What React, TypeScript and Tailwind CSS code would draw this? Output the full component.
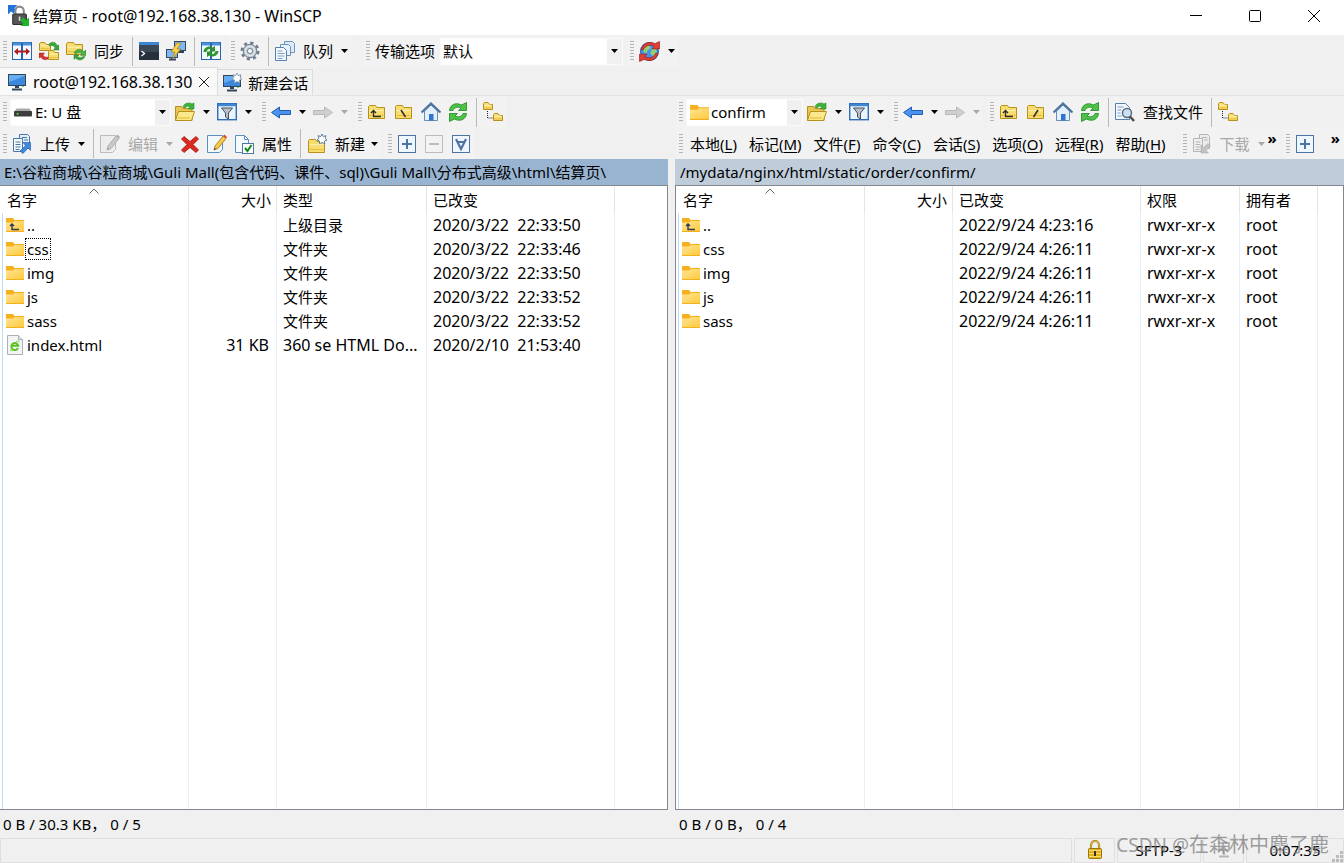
import type { ReactNode } from "react";
import { clsx } from "clsx";

type FileEntry = {
  name: string;
  icon: "up" | "folder" | "html";
  cells: string[];
  focused?: boolean;
};

type Column = {
  title: string;
  width: string;
  align?: "right";
};

const localColumns: Column[] = [
  { title: "名字", width: "w-[187px]" },
  { title: "大小", width: "w-[88px]", align: "right" },
  { title: "类型", width: "w-[150px]" },
  { title: "已改变", width: "w-[188px]" },
];

const localFiles: FileEntry[] = [
  { name: "..", icon: "up", cells: ["", "上级目录", "2020/3/22  22:33:50"] },
  { name: "css", icon: "folder", cells: ["", "文件夹", "2020/3/22  22:33:46"], focused: true },
  { name: "img", icon: "folder", cells: ["", "文件夹", "2020/3/22  22:33:50"] },
  { name: "js", icon: "folder", cells: ["", "文件夹", "2020/3/22  22:33:52"] },
  { name: "sass", icon: "folder", cells: ["", "文件夹", "2020/3/22  22:33:52"] },
  { name: "index.html", icon: "html", cells: ["31 KB", "360 se HTML Do...", "2020/2/10  21:53:40"] },
];

const remoteColumns: Column[] = [
  { title: "名字", width: "w-[187px]" },
  { title: "大小", width: "w-[88px]", align: "right" },
  { title: "已改变", width: "w-[188px]" },
  { title: "权限", width: "w-[99px]" },
  { title: "拥有者", width: "w-[78px]" },
];

const remoteFiles: FileEntry[] = [
  { name: "..", icon: "up", cells: ["", "2022/9/24 4:23:16", "rwxr-xr-x", "root"] },
  { name: "css", icon: "folder", cells: ["", "2022/9/24 4:26:11", "rwxr-xr-x", "root"] },
  { name: "img", icon: "folder", cells: ["", "2022/9/24 4:26:11", "rwxr-xr-x", "root"] },
  { name: "js", icon: "folder", cells: ["", "2022/9/24 4:26:11", "rwxr-xr-x", "root"] },
  { name: "sass", icon: "folder", cells: ["", "2022/9/24 4:26:11", "rwxr-xr-x", "root"] },
];

const menus = [
  ["本地", "L"],
  ["标记", "M"],
  ["文件", "F"],
  ["命令", "C"],
  ["会话", "S"],
  ["选项", "O"],
  ["远程", "R"],
  ["帮助", "H"],
];

/* ---------- icons ---------- */

const Svg = ({ children, className = "size-5" }: { children: ReactNode; className?: string }) => (
  <svg viewBox="0 0 20 20" fill="none" className={clsx("shrink-0", className)} aria-hidden="true">
    {children}
  </svg>
);

const FolderShape = ({ x = 0, y = 0, w = 16, h = 14 }: { x?: number; y?: number; w?: number; h?: number }) => (
  <g>
    <path
      d={`M${x + 0.5} ${y + h - 0.5}V${y + 1.5}l1-1h${w * 0.35}l1.5 2H${x + w - 0.5}V${y + h - 0.5}z`}
      fill="#f7dc6f"
      stroke="#b8901c"
    />
    <path d={`M${x + 1.5} ${y + h * 0.4}H${x + w - 1.5}`} stroke="#fdf3b8" />
    <path d={`M${x + 1.5} ${y + h * 0.75}H${x + w - 1.5}`} stroke="#e5bd38" />
  </g>
);

const PanesShape = () => (
  <g>
    <rect x="0.5" y="1.5" width="19" height="17" fill="#f3f9ff" stroke="#2766ae" />
    <path d="M1 3h18" stroke="#4a90d9" strokeWidth="3" />
    <path d="M10 2v16" stroke="#2766ae" strokeWidth="2" />
  </g>
);

const CompareIcon = () => (
  <Svg>
    <PanesShape />
    <path d="M2 10.500l4-3.500v2.500h8V7l4 3.500-4 3.500v-2.500H6V14z" fill="#b31b1b" />
  </Svg>
);

const SyncBrowseIcon = () => (
  <Svg>
    <FolderShape x={0} y={1} w={12} h={9} />
    <FolderShape x={9} y={9} w={11} h={10} />
    <path d="M10 3c3-3 7-2 8 1.500L20 4v5h-5.500L16 7c-1-2.500-3-3-6-2z" fill="#3aa53a" stroke="#1c7a1c" strokeWidth=".4" />
    <path d="M9 18c-3 1.500-6 .5-7-2l-2 1v-5h5.500L4 14c1 2 3 2.500 5 2z" fill="#d8332c" stroke="#96160f" strokeWidth=".4" />
  </Svg>
);

const SyncFolderIcon = () => (
  <Svg>
    <FolderShape x={0} y={1} w={17} h={13} />
    <path d="M8 12c1.500-4 7-5 9.500-1.500L20 9v5.500h-5.500l1.500-1.500c-2-2-4.500-1.500-6 0z" fill="#4cb044" stroke="#1c7a1c" strokeWidth=".4" />
    <path d="M19 15.500c-1.500 4-7 4.500-9.500 1.500L8 18.500V14h5l-1.500 1.500c2 1.500 4 1 5.500 0z" fill="#3aa53a" stroke="#1c7a1c" strokeWidth=".4" />
  </Svg>
);

const TerminalIcon = () => (
  <Svg>
    <rect x="0" y="1" width="20" height="18" fill="#25303c" />
    <rect x="0" y="1" width="20" height="3" fill="#3e86d2" />
    <path d="M0 4h20v7H0z" fill="#3b4856" />
    <path d="M2.500 10l3 2.500-3 2.500" stroke="#fff" strokeWidth="1.300" />
  </Svg>
);

const PuttyIcon = () => (
  <Svg>
    <rect x="8.500" y=".5" width="11" height="9" fill="#7db8f2" stroke="#33475c" />
    <rect x=".5" y="8.500" width="11" height="8" fill="#7db8f2" stroke="#33475c" />
    <path d="M12 11h6M3 18.500h7M6 17v2" stroke="#33475c" strokeWidth="2" />
    <path d="M11 2L5 11h4l-3 7 9-10h-4l4-6z" fill="#fbd24e" stroke="#a87b10" strokeWidth=".7" />
  </Svg>
);

const RefreshPanesIcon = () => (
  <Svg>
    <PanesShape />
    <path d="M2.500 11c0-4 5-7 9-4.500L14 5v5.500H8.500L10 8.500c-2-1-4 0-4.500 2.500z" fill="#2c962c" />
    <path d="M17.500 10c0 4-5 7-9 4.500L6 16v-5.500h5.500L10 12.500c2 1 4 0 4.500-2.500z" fill="#2c962c" />
  </Svg>
);

const GearIcon = () => (
  <Svg>
    <circle cx="10" cy="10" r="8.200" stroke="#6f7d8c" strokeWidth="2.600" strokeDasharray="3.200 3.240" />
    <circle cx="10" cy="10" r="6.800" fill="#bcc5cf" stroke="#6f7d8c" />
    <circle cx="10" cy="10" r="4.600" stroke="#dfe5eb" strokeWidth="1.500" />
    <circle cx="10" cy="10" r="2.500" fill="#fff" stroke="#6f7d8c" />
  </Svg>
);

const QueueIcon = () => (
  <Svg>
    <path d="M9.500.5h8l2 2v9h-10z" fill="#dcebf9" stroke="#6d93bb" />
    <path d="M5.500 3.500h8l2 2v9h-10z" fill="#e6f1fb" stroke="#6d93bb" />
    <path d="M.5 6.500h8l3 3v10H.5z" fill="#f5faff" stroke="#5580ad" />
    <path d="M2.500 10h5M2.500 12.500h7M2.500 15h7M2.500 17.500h5" stroke="#7ba0c6" />
  </Svg>
);

const GlobeIcon = () => (
  <Svg className="size-[21px]">
    <circle cx="10" cy="10" r="8.500" fill="#4a94e4" stroke="#235a9e" />
    <path d="M5 6l5-2 1 3-3 2-1 3-3-2zM12 8l4-1 1 4-3 4-3-3z" fill="#8fd07a" />
    <path d="M2 8C4 2 9 0 15 2.500L19.500.5v7h-7L14.500 5C10 3 6 4 4 8.500z" fill="#e04038" stroke="#96160f" strokeWidth=".6" />
    <path d="M18 12c-2 6-7 8-13 5.500L.5 19.500v-7h7L5.500 15c4.500 2 8.500 1 10.500-3.500z" fill="#e04038" stroke="#96160f" strokeWidth=".6" />
  </Svg>
);

const MonitorIcon = ({ star }: { star?: boolean }) => (
  <Svg>
    <rect x="1.500" y="2.500" width="17" height="11" fill="#66adf2" stroke="#33475c" />
    <path d="M2 10L18 4v9H2z" fill="#3b88dc" />
    <path d="M10 14v2" stroke="#33475c" strokeWidth="4" />
    <path d="M5 17.500h10" stroke="#33475c" strokeWidth="2" />
    <path d="M15 14.500h2" stroke="#5fe05f" />
    {star && (
      <path d="M15 0l1.200 2.500 2.800-.8-1 2.600 2 1.700-2.500 1 .2 2.800L15 8.500l-2.500 1.300V7L10 6l2-1.700-1-2.600 2.800.8z" fill="#fff" stroke="#8194a8" strokeWidth=".8" />
    )}
  </Svg>
);

const DriveIcon = ({ className }: { className?: string }) => (
  <Svg className={className}>
    <path d="M3 6h14l3 4H0z" fill="#a9a9a9" />
    <rect x="0" y="9" width="20" height="6" rx="1" fill="#3d3d3d" />
    <path d="M3 12h2" stroke="#5df05d" strokeWidth="1.500" />
  </Svg>
);

const OpenFolderIcon = () => (
  <Svg>
    <path d="M.5 18.500v-14h6l1.500 2h9v12z" fill="#e8c452" stroke="#b8901c" />
    <path d="M.5 18.500l3-9h16l-3 9z" fill="#fae88f" stroke="#b8901c" />
    <path d="M3 16h12" stroke="#f1cf52" strokeWidth="2" />
    <path d="M8 5c1-4 6-5 9-3l2-1v6h-6l2-2c-2-1-4-1-5 1z" fill="#3db33d" stroke="#1f8a1f" strokeWidth=".6" />
  </Svg>
);

const FilterIcon = () => (
  <Svg>
    <rect x=".7" y="1.700" width="18.600" height="16" fill="#e9f3fd" stroke="#2f6db4" strokeWidth="1.400" />
    <path d="M1 3h18" stroke="#3f86d2" strokeWidth="2.500" />
    <path d="M4.500 6h11l-4 5v6l-3-2v-4z" fill="#b6bec7" stroke="#49525c" />
  </Svg>
);

const ArrowIcon = ({ forward }: { forward?: boolean }) => (
  <Svg>
    {forward ? (
      <path d="M19.500 10.500l-8-5.500v3.500H.5v4h11V16z" fill="#cfcfcf" stroke="#b8b8b8" />
    ) : (
      <path d="M.5 10.500L8.500 5v3.500h11v4h-11V16z" fill="#4b93ee" stroke="#1f5db0" />
    )}
  </Svg>
);

const MarkFolderIcon = ({ mark }: { mark: "up" | "back" | "slash" | "star" }) => (
  <Svg>
    <FolderShape x={1} y={mark === "star" ? 5 : 3} w={17} h={14} />
    {mark === "up" && <path d="M4 11l2.500-2.500L9 11M6.500 9v5.500H14" stroke="#2c2c2c" strokeWidth="1.300" />}
    {mark === "back" && <path d="M7 8l4.500 7" stroke="#2c2c2c" strokeWidth="1.500" />}
    {mark === "slash" && <path d="M12 8l-4.500 7" stroke="#2c2c2c" strokeWidth="1.500" />}
    {mark === "star" && (
      <path d="M15 0l1.200 2.500 2.800-.8-1 2.600 2 1.700-2.500 1 .2 2.800L15 8.500l-2.500 1.300V7L10 6l2-1.700-1-2.600 2.800.8z" fill="#fff" stroke="#5f7f9f" />
    )}
  </Svg>
);

const HomeIcon = () => (
  <Svg>
    <path d="M3.500 9v9.500h13V9L10 3z" fill="#e3effb" stroke="#6b8db3" />
    <path d="M.5 10.500L10 1.500l9.500 9" stroke="#4f74a0" strokeWidth="2.200" />
    <rect x="8" y="12" width="4.500" height="6.500" fill="#2f74d0" />
  </Svg>
);

const RefreshIcon = () => (
  <Svg>
    <path d="M1.500 8.500C2 2.500 8 0 13.500 3L18.500.5v8h-8L13 6C10 4.500 6.500 5 5 8.500z" fill="#4fc04a" stroke="#1c8a1c" strokeWidth=".8" />
    <path d="M18.500 11.500c-.5 6-6.500 8.500-12 5.500l-5 2.500v-8h8L7 14c3 1.500 6.500 1 8-2.500z" fill="#4fc04a" stroke="#1c8a1c" strokeWidth=".8" />
  </Svg>
);

const TreeIcon = () => (
  <Svg>
    <FolderShape x={0} y={0} w={10} h={8} />
    <FolderShape x={10} y={11} w={10} h={8} />
    <path d="M4.500 9v7H10" stroke="#222" strokeDasharray="1 1" />
  </Svg>
);

const FindIcon = () => (
  <Svg>
    <path d="M.5 1.500h10l4 4v12H.5z" fill="#f2f8fe" stroke="#5580ad" />
    <path d="M2.500 5h6M2.500 8h4M2.500 11h3M2.500 14h4" stroke="#7ba0c6" />
    <circle cx="12" cy="11" r="4.500" fill="#c9e2f8" stroke="#5c6b7a" strokeWidth="1.500" />
    <path d="M15 14.500l4 4.500" stroke="#4a4a4a" strokeWidth="2.400" />
  </Svg>
);

const TransferIcon = ({ disabled }: { disabled?: boolean }) => {
  const stroke = disabled ? "#b5b5b5" : "#4a78ab";
  return (
    <Svg>
      <path d="M7.500.5h8l2 2v12h-10z" fill={disabled ? "#ececec" : "#e3effb"} stroke={stroke} />
      <path d="M1.500 4.500h9v13h-9z" fill={disabled ? "#efefef" : "#f5faff"} stroke={stroke} />
      <path d="M3.500 8h5M3.500 10.500h5M3.500 13h5M3.500 15.500h4M10 3.500h5M12 6h4" stroke={stroke} />
      {disabled ? (
        <path d="M9 19v-8l2.500 2.500L16 9.500l2.500 2.500-4.500 4.500 2.500 2.500z" fill="#c2c2c2" stroke="#a8a8a8" strokeWidth=".6" />
      ) : (
        <path d="M18.500 8.500v8L16 14l-5 5.500L8 17l5.500-5.500L11 8.500z" fill="#3f86dd" stroke="#235a9e" strokeWidth=".6" />
      )}
    </Svg>
  );
};

const EditIcon = ({ disabled }: { disabled?: boolean }) => (
  <Svg>
    <path d="M.5 1.500h15v14l-3 3H.5z" fill={disabled ? "#ededed" : "#f2f8fe"} stroke={disabled ? "#bcbcbc" : "#5c8fc4"} />
    <path d="M7 16l1-4L16 2l3 2.500-8 10z" fill={disabled ? "#c9c9c9" : "#f7c948"} stroke={disabled ? "#a5a5a5" : "#9a7410"} strokeWidth=".8" />
    <path d="M16 2l1.500-1.500L20 3l-1 1.500z" fill={disabled ? "#b0b0b0" : "#e0483c"} />
    <path d="M7 16l.5-2 1.500 1z" fill={disabled ? "#999" : "#333"} />
  </Svg>
);

const DeleteIcon = () => (
  <Svg>
    <path d="M4 2.500l6 5 6-5 2.500 2.500-5.500 5.500 5.500 5.500-2.500 2.500-6-5-6 5L1.500 16 7 10.500 1.500 5z" fill="#dc2a20" stroke="#a0140e" strokeWidth=".8" />
  </Svg>
);

const PropertiesIcon = () => (
  <Svg>
    <path d="M1.500 1.500h9l4 4v13h-13z" fill="#f5faff" stroke="#5c8fc4" />
    <path d="M10.500 1.500v4h4" stroke="#5c8fc4" />
    <rect x="8.500" y="9.500" width="11" height="10" fill="#fff" stroke="#4a78ab" />
    <path d="M11 14l2.500 3 4-6" stroke="#178a17" strokeWidth="2" />
  </Svg>
);

const BoxIcon = ({ kind }: { kind: "plus" | "minus" | "invert" }) => {
  const color = kind === "minus" ? "#bdbdbd" : "#4f74a3";
  return (
    <Svg>
      <rect x="1.500" y="1.500" width="17" height="17" fill={kind === "minus" ? "#f3f3f3" : "#eef6fe"} stroke={color} />
      {kind === "plus" && <path d="M10 5v10M5 10h10" stroke={color} strokeWidth="2" />}
      {kind === "minus" && <path d="M5 10h10" stroke={color} strokeWidth="2" />}
      {kind === "invert" && <path d="M5 5l5 10 5-10M7 8h6" stroke={color} strokeWidth="2.200" />}
    </Svg>
  );
};

const FileIcon = ({ kind, className = "size-[18px]" }: { kind: FileEntry["icon"]; className?: string }) => {
  if (kind === "html") {
    return (
      <svg viewBox="0 0 18 20" fill="none" className="h-5 w-[18px] shrink-0" aria-hidden="true">
        <path d="M1.500.5h11l4 4v15h-15z" fill="#f4f4f4" stroke="#a9b0b8" />
        <path d="M12.500.5v4h4" fill="#dfe3e8" stroke="#a9b0b8" />
        <path d="M12 13a3.500 3.500 0 11.300-2.200H6" stroke="#58c322" strokeWidth="2" />
        <path d="M4.500 14.500c-1 1.500 1 1.500 3.500 0M10 7c2-1.500 3.500-1.500 3 .5" stroke="#7ad84a" />
      </svg>
    );
  }
  return (
    <svg viewBox="0 0 18 18" fill="none" className={clsx("shrink-0", className)} aria-hidden="true">
      <defs>
        <linearGradient id="folder-face" x1="0" y1="0" x2="1" y2="1">
          <stop offset="0" stopColor="#ffe596" />
          <stop offset="1" stopColor="#ffca3e" />
        </linearGradient>
      </defs>
      <path d="M0 2h7l1.500 2H18v12H0z" fill="#f5b01f" />
      <path d="M0 6.500h7L8.500 5H18v10H0z" fill="url(#folder-face)" />
      {kind === "up" && <path d="M4 10l2-2 2 2M6 8.500v5h7" stroke="#2b3a55" strokeWidth="1.400" />}
    </svg>
  );
};

const AppIcon = () => (
  <Svg className="size-[21px]">
    <path d="M0 0h9L6 3l2 2-3 3-2-2-3 3z" fill="#1e74dc" />
    <path d="M7 9V5.500a4 4 0 018 0V9" stroke="#8b8b8b" strokeWidth="2" />
    <rect x="4.500" y="8.500" width="13" height="10" rx="1" fill="#555" stroke="#2f2f2f" />
    <path d="M11 11v4" stroke="#ddd" strokeWidth="1.500" />
    <path d="M20 20h-8l2.500-2.500-3-3 3-2.500 2.500 2.500L20 12z" fill="#1fb52c" />
  </Svg>
);

const LockIcon = () => (
  <svg viewBox="0 0 14 20" fill="none" className="h-5 w-3.5" aria-hidden="true">
    <path d="M3 9V5a4 4 0 018 0v4" stroke="#a8861c" strokeWidth="2.200" />
    <path d="M3 9V5a4 4 0 018 0v4" stroke="#e6c65a" strokeWidth=".8" />
    <rect x=".5" y="8.500" width="13" height="10" rx="1" fill="#e5b31f" stroke="#9a7410" />
    <path d="M1 10.500h12M1 13.500h12M1 16.500h12" stroke="#f9dc6a" />
    <path d="M7 11v5" stroke="#333" strokeWidth="2" />
  </svg>
);

const Caret = ({ disabled, className }: { disabled?: boolean; className?: string }) => (
  <svg viewBox="0 0 7 4" className={clsx("h-1 w-[7px] shrink-0", className)} aria-hidden="true">
    <path d="M0 0h7L3.500 4z" fill={disabled ? "#a8a8a8" : "#000"} />
  </svg>
);

/* ---------- toolbar parts ---------- */

const Bar = ({ children, label, className }: { children: ReactNode; label: string; className?: string }) => (
  <div role="toolbar" aria-label={label} className={clsx("flex h-[31px] shrink-0 items-center bg-[#f2f2f2] pl-[3px]", className)}>
    <span className="mr-px h-5 w-1 shrink-0 bg-[repeating-linear-gradient(to_bottom,#b4b4b4_0px,#b4b4b4_1px,transparent_1px,transparent_3px)]" />
    {children}
  </div>
);

const Sep = () => <span className="mr-0.5 ml-[5px] h-[29px] w-px shrink-0 bg-[#b9b9b9]" />;

type ToolButtonProps = {
  title: string;
  icon: ReactNode;
  text?: string;
  drop?: boolean;
  disabled?: boolean;
  tight?: boolean;
};

const ToolButton = ({ title, icon, text, drop, disabled, tight }: ToolButtonProps) => (
  <button
    type="button"
    title={title}
    aria-label={title}
    disabled={disabled}
    className={clsx("flex h-7 shrink-0 items-center pr-[3px] pl-1 hover:bg-[#d8e6f2]", disabled && "text-[#a8a8a8]")}
  >
    {icon}
    {text && <span className="ml-2 whitespace-nowrap">{text}</span>}
    {drop && <Caret disabled={disabled} className={tight ? "ml-1.5" : "ml-2"} />}
  </button>
);

type ComboProps = {
  label: string;
  value: string;
  className: string;
  icon?: ReactNode;
};

const Combo = ({ label, value, className, icon }: ComboProps) => (
  <div className={clsx("relative h-[27px] shrink-0 border border-[#fafafa] bg-white", className)}>
    <select
      aria-label={label}
      defaultValue={value}
      className={clsx("h-full w-full appearance-none bg-transparent pr-4 outline-none", icon ? "pl-6" : "pl-0.5")}
    >
      <option>{value}</option>
    </select>
    {icon && <span className="pointer-events-none absolute top-[3px] left-[3px]">{icon}</span>}
    <span className="pointer-events-none absolute top-0 right-0 flex h-full w-[15px] items-center justify-center bg-[#f0f0f0]">
      <Caret />
    </span>
  </div>
);

const MoreButton = ({ label, className }: { label: string; className?: string }) => (
  <button type="button" aria-label={label} className={clsx("mb-3 shrink-0 font-bold", className)}>
    »
  </button>
);

const NavigationBars = ({ side }: { side: "local" | "remote" }) => {
  const remote = side === "remote";
  return (
    <div className="flex h-8 items-center gap-1 overflow-hidden">
      <Bar label="位置">
        {remote ? (
          <Combo label="远程目录" value="confirm" className="ml-0.5 w-[117px]" icon={<FileIcon kind="folder" className="size-[19px]" />} />
        ) : (
          <Combo label="驱动器" value="E: U 盘" className="ml-0.5 w-[161px]" icon={<DriveIcon className="size-[18px]" />} />
        )}
        <ToolButton title="打开目录" icon={<OpenFolderIcon />} drop />
        <ToolButton title="过滤" icon={<FilterIcon />} drop />
      </Bar>
      <Bar label="历史">
        <ToolButton title="后退" icon={<ArrowIcon />} drop />
        <ToolButton title="前进" icon={<ArrowIcon forward />} drop disabled />
      </Bar>
      <Bar label="导航">
        <ToolButton title="上级目录" icon={<MarkFolderIcon mark="up" />} />
        <ToolButton title="根目录" icon={<MarkFolderIcon mark={remote ? "slash" : "back"} />} />
        <ToolButton title="主目录" icon={<HomeIcon />} />
        <ToolButton title="刷新" icon={<RefreshIcon />} />
        <Sep />
        {remote && (
          <>
            <ToolButton title="查找文件" icon={<FindIcon />} text="查找文件" />
            <Sep />
          </>
        )}
        <ToolButton title="目录树" icon={<TreeIcon />} />
      </Bar>
    </div>
  );
};

/* ---------- file panel ---------- */

const isLatin = (text: string) => /^[\x20-\x7e]+$/.test(text);

type FileTableProps = {
  columns: Column[];
  files: FileEntry[];
  label: string;
};

const FileTable = ({ columns, files, label }: FileTableProps) => (
  <table aria-label={label} className="h-full w-full table-fixed border-separate border-spacing-0">
    <thead>
      <tr className="h-[27px]">
        {columns.map((column, index) => (
          <th
            key={column.title}
            scope="col"
            className={clsx(
              "relative border-r border-[#e5e5e5] p-0 font-normal",
              column.width,
              column.align === "right" ? "pr-[5px] text-right" : "text-left",
              index === 0 ? "pl-[5px]" : "pl-1.5",
            )}
          >
            {index === 0 && (
              <svg viewBox="0 0 10 6" className="absolute top-0.5 left-[87px] h-1.5 w-2.5" fill="none" aria-hidden="true">
                <path d="M.5 5.500L5 1l4.500 4.500" stroke="#666" />
              </svg>
            )}
            {column.title}
          </th>
        ))}
        <th className="p-0" />
      </tr>
    </thead>
    <tbody>
      {files.map((file) => (
        <tr key={file.name} className="h-6">
          <td className="border-r border-l border-r-[#e6f0fb] border-l-[#bcdcf8] p-0 pl-[3px]">
            <div className="flex h-6 items-center">
              <FileIcon kind={file.icon} />
              <span className={clsx("ml-0.5 px-px leading-5", file.focused && "outline outline-dotted outline-black")}>
                {file.name}
              </span>
            </div>
          </td>
          {file.cells.map((cell, index) => (
            <td
              key={columns[index + 1].title}
              className={clsx(
                "overflow-hidden border-r border-[#e6f0fb] p-0 whitespace-pre",
                columns[index + 1].align === "right" ? "pr-[7px] text-right" : "pl-1.5",
                cell && isLatin(cell) && "text-[16px]",
              )}
            >
              {cell}
            </td>
          ))}
          <td className="p-0" />
        </tr>
      ))}
      <tr>
        {columns.map((column, index) => (
          <td
            key={column.title}
            className={clsx("border-r border-r-[#e6f0fb] p-0", index === 0 && "border-l border-l-[#bcdcf8]")}
          />
        ))}
        <td className="p-0" />
      </tr>
    </tbody>
  </table>
);

type PanelProps = FileTableProps & {
  path: string;
  status: string;
  active?: boolean;
  toolbars: ReactNode;
};

const Panel = ({ path, status, active, toolbars, ...table }: PanelProps) => (
  <section className={clsx("flex min-h-0 min-w-0 flex-1 flex-col", !active && "pl-px")}>
    {toolbars}
    <div
      className={clsx(
        "-ml-px flex h-[26px] shrink-0 items-center overflow-hidden pl-[5px] whitespace-nowrap",
        active ? "bg-[#99b4d1]" : "bg-[#bfcddb]",
      )}
    >
      {path}
    </div>
    <div className="-ml-px min-h-0 flex-1 border border-[#828790] bg-white pl-0.5">
      <FileTable {...table} />
    </div>
    <p className="flex h-7 shrink-0 items-center pl-[3px] whitespace-pre">{status}</p>
  </section>
);

const LocalToolbars = () => (
  <>
    <NavigationBars side="local" />
    <div className="flex h-[31px] items-center gap-1 overflow-hidden">
      <Bar label="本地文件">
        <ToolButton title="上传" icon={<TransferIcon />} text="上传" drop />
        <Sep />
        <ToolButton title="编辑" icon={<EditIcon disabled />} text="编辑" drop disabled />
        <ToolButton title="删除" icon={<DeleteIcon />} />
        <ToolButton title="重命名" icon={<EditIcon />} />
        <ToolButton title="属性" icon={<PropertiesIcon />} text="属性" />
        <Sep />
        <ToolButton title="新建" icon={<MarkFolderIcon mark="star" />} text="新建" drop tight />
      </Bar>
      <Bar label="选择">
        <ToolButton title="选择文件" icon={<BoxIcon kind="plus" />} />
        <ToolButton title="取消选择" icon={<BoxIcon kind="minus" />} disabled />
        <ToolButton title="反向选择" icon={<BoxIcon kind="invert" />} />
      </Bar>
    </div>
  </>
);

const RemoteToolbars = () => (
  <>
    <NavigationBars side="remote" />
    <div className="flex h-[31px] items-center gap-1 overflow-hidden">
      <Bar label="菜单">
        <div className="flex gap-3 pr-2.5 pl-1.5">
          {menus.map(([name, key]) => (
            <button key={key} type="button" className="whitespace-nowrap">
              {name}(<span className="underline underline-offset-2">{key}</span>)
            </button>
          ))}
        </div>
      </Bar>
      <Bar label="远程文件">
        <ToolButton title="下载" icon={<TransferIcon disabled />} text="下载" drop disabled />
        <MoreButton label="更多远程命令" className="pr-0.5" />
      </Bar>
      <Bar label="远程选择" className="flex-1">
        <ToolButton title="选择文件" icon={<BoxIcon kind="plus" />} />
        <MoreButton label="更多选择命令" className="mr-1 ml-auto" />
      </Bar>
    </div>
  </>
);

const TitleBar = () => (
  <header className="flex h-[35px] shrink-0 items-center bg-white pr-px pb-1 pl-2">
    <AppIcon />
    <h1 className="ml-1 flex-1">
      结算页<span className="text-[16px]"> - root@192.168.38.130 - WinSCP</span>
    </h1>
    <div className="flex h-7 [&>button]:flex [&>button]:w-[59px] [&>button]:items-center [&>button]:justify-center">
      <button type="button" aria-label="最小化">
        <svg viewBox="0 0 12 12" className="size-3" stroke="#000"><path d="M0 5.500h12" /></svg>
      </button>
      <button type="button" aria-label="最大化">
        <svg viewBox="0 0 12 12" className="size-3" fill="none" stroke="#000">
          <rect x=".5" y=".5" width="11" height="11" rx="1" />
        </svg>
      </button>
      <button type="button" aria-label="关闭">
        <svg viewBox="0 0 12 12" className="size-3" stroke="#000"><path d="M0 0l12 12M12 0L0 12" /></svg>
      </button>
    </div>
  </header>
);

const App = () => (
  <div className="flex h-screen flex-col overflow-hidden bg-[#f0f0f0] font-['Noto_Sans','Noto_Sans_CJK_SC',sans-serif] text-[15px] leading-5 text-black">
    <TitleBar />

    <div className="flex h-8 shrink-0 items-center gap-1">
      <Bar label="同步">
        <ToolButton title="比较目录" icon={<CompareIcon />} />
        <ToolButton title="同步浏览" icon={<SyncBrowseIcon />} />
        <ToolButton title="同步" icon={<SyncFolderIcon />} text="同步" />
        <Sep />
        <ToolButton title="打开终端" icon={<TerminalIcon />} />
        <ToolButton title="在 PuTTY 中打开" icon={<PuttyIcon />} />
        <Sep />
        <ToolButton title="刷新面板" icon={<RefreshPanesIcon />} />
      </Bar>
      <Bar label="选项">
        <ToolButton title="选项" icon={<GearIcon />} />
        <Sep />
        <ToolButton title="队列" icon={<QueueIcon />} text="队列" drop />
      </Bar>
      <Bar label="传输" className="ml-2">
        <span className="mr-[5px] ml-1">传输选项</span>
        <Combo label="传输选项" value="默认" className="w-[183px]" />
      </Bar>
      <Bar label="传输设置">
        <ToolButton title="传输设置" icon={<GlobeIcon />} drop />
      </Bar>
    </div>

    <nav aria-label="会话" className="flex h-[29px] shrink-0 items-end border-b border-[#e3e3e3]">
      <div className="flex h-full items-center border-t border-r border-[#dcdcdc] bg-[#f9f9f9] pr-[7px] pl-[7px]">
        <button type="button" className="flex items-center gap-1.5 text-[16px]">
          <MonitorIcon />
          root@192.168.38.130
        </button>
        <button type="button" aria-label="关闭会话" className="ml-1.5">
          <svg viewBox="0 0 12 12" className="size-3" stroke="#222"><path d="M1 1l10 10M11 1L1 11" /></svg>
        </button>
      </div>
      <button type="button" className="flex h-[26px] items-center gap-1 border-t border-r border-[#dcdcdc] bg-[#f2f2f2] px-1">
        <MonitorIcon star />
        <span className="ml-0.5">新建会话</span>
      </button>
    </nav>

    <main className="flex min-h-0 flex-1 gap-[7px]">
      <Panel
        active
        label="本地文件"
        path="E:\谷粒商城\谷粒商城\Guli Mall(包含代码、课件、sql)\Guli Mall\分布式高级\html\结算页\"
        status="0 B / 30.3 KB， 0 / 5"
        columns={localColumns}
        files={localFiles}
        toolbars={<LocalToolbars />}
      />
      <Panel
        label="远程文件"
        path="/mydata/nginx/html/static/order/confirm/"
        status="0 B / 0 B， 0 / 4"
        columns={remoteColumns}
        files={remoteFiles}
        toolbars={<RemoteToolbars />}
      />
    </main>

    <footer className="relative flex h-[25px] shrink-0 gap-0.5 [&>div]:flex [&>div]:items-center [&>div]:justify-center [&>div]:border [&>div]:border-[#dfdfdf] [&>div]:pb-0.5">
      <div className="flex-1" />
      <div className="w-[41px]">
        <LockIcon />
      </div>
      <div className="w-[84px]">SFTP-3</div>
      <div className="w-[41px]">
        <svg viewBox="0 0 12 16" className="h-4 w-3" fill="none" stroke="#b5b5b5" aria-hidden="true">
          <path d="M1 1h10v7H1zM6 8v5M1 14.500h10" strokeWidth="2" />
        </svg>
      </div>
      <div className="w-[98px]">0:07:35</div>
      <svg viewBox="0 0 12 12" className="absolute right-0 bottom-0 size-3" fill="#bcbcbc" aria-hidden="true">
        <path d="M8 0h3v3H8zM4 4h3v3H4zM8 4h3v3H8zM0 8h3v3H0zM4 8h3v3H4zM8 8h3v3H8z" />
      </svg>
      <span className="absolute right-[15px] bottom-1.5 text-[19px] leading-6 whitespace-nowrap text-[#808080]/75">
        CSDN @<span className="text-[20px]">在森林中麋了鹿</span>
      </span>
    </footer>
  </div>
);

export default App;
